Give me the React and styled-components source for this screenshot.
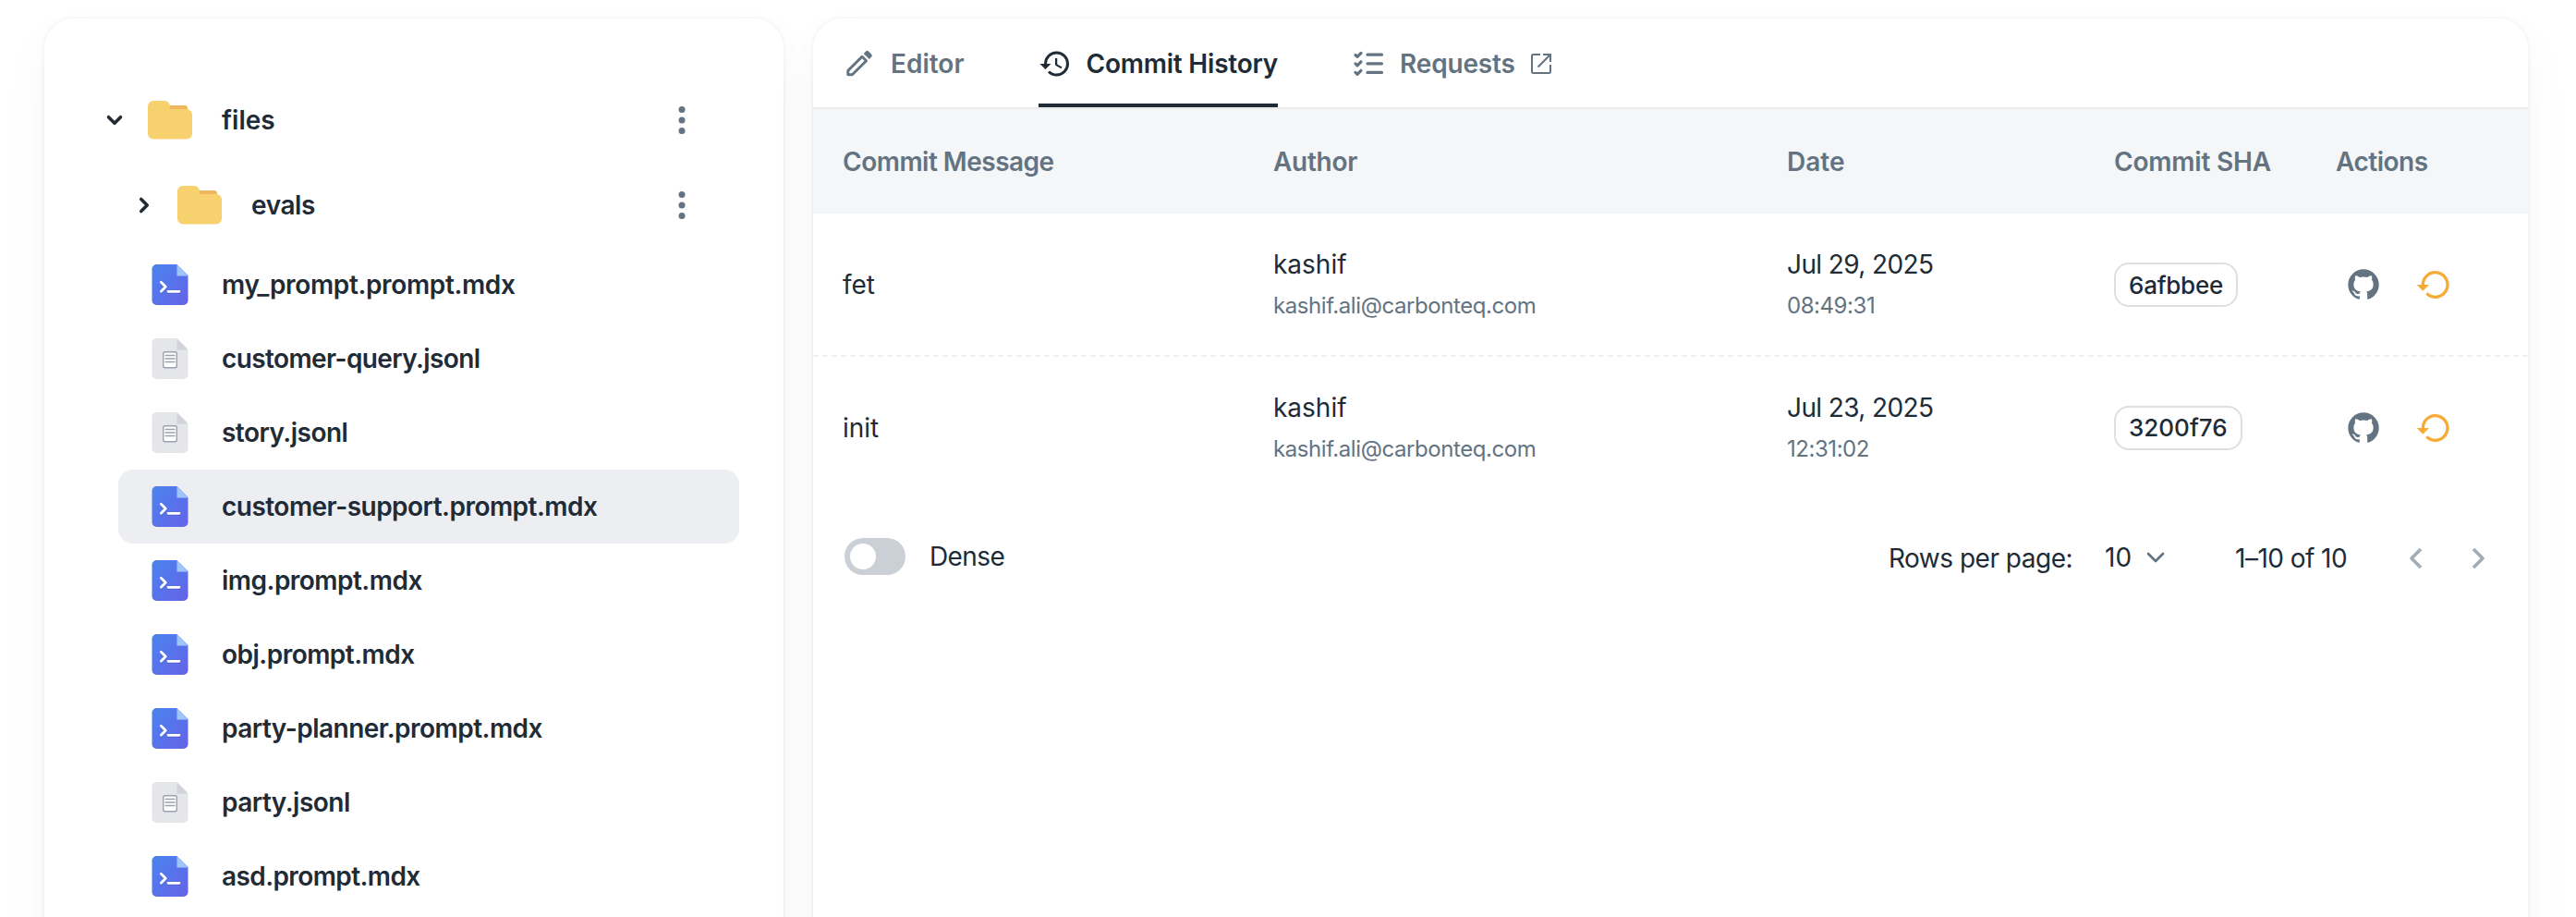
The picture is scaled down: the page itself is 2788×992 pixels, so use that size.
import React from "react";
import styled, { createGlobalStyle } from "styled-components";

const colors = {
  ink: "#212b36",
  gray: "#637381",
  disabled: "#a3adb8",
  warning: "#f5ab35",
};

const GlobalStyle = createGlobalStyle`
  *{
    box-sizing:border-box;
  }
  body{
    margin:0;
    background:#fff;
    color:${colors.ink};
    font-family:Inter, "Liberation Sans", sans-serif;
    font-size:28px;
  }
`;

const Page = styled.main`
  display: flex;
  gap: 32px;
  width: 2788px;
  height: 992px;
  padding: 20px 52px 0 48px;
  overflow: hidden;
`;

const Card = styled.section`
  height: 1200px;
  background: #fff;
  border-radius: 32px;
  box-shadow: 0 0 4px rgba(145, 158, 171, 0.2), 0 24px 48px -8px rgba(145, 158, 171, 0.12);
`;

const Sidebar = styled(Card)`
  width: 800px;
  flex-shrink: 0;
  padding: 64px 48px 0 60px;
`;

const Content = styled(Card)`
  flex: 1;
  overflow: hidden;
`;

const Text = styled.span`
  font-size: ${(p) => p.$size || 28}px;
  font-weight: ${(p) => p.$weight || 400};
  letter-spacing: ${(p) => p.$track || 0}px;
  color: ${(p) => p.$color || colors.ink};
  line-height: 44px;
  white-space: nowrap;
`;

const FolderRow = styled.div`
  display: flex;
  align-items: center;
  height: 92px;
  padding-left: ${(p) => p.$level * 32 + 3}px;
  padding-right: 58px;
  .folder {
    margin: 0 32px 0 23px;
  }
  .more {
    margin-left: auto;
  }
`;

const FileRow = styled.div`
  display: flex;
  align-items: center;
  gap: 36px;
  height: 80px;
  margin-left: 20px;
  padding-left: 36px;
  border-radius: 16px;
  background: ${(p) => (p.$active ? "#edeef2" : "transparent")};
`;

const Tabs = styled.nav`
  display: flex;
  gap: 80px;
  height: 98px;
  padding-left: 32px;
  border-bottom: 2px solid #e8eaec;
`;

const Tab = styled.div`
  display: flex;
  align-items: center;
  gap: 16px;
  height: 96px;
  padding-top: 1px;
  color: ${(p) => (p.$active ? colors.ink : colors.gray)};
  box-shadow: inset 0 -4px 0 ${(p) => (p.$active ? colors.ink : "transparent")};
`;

const Row = styled.div`
  display: grid;
  grid-template-columns: 466px 556px 354px 240px 1fr;
  align-items: center;
  height: ${(p) => (p.$last ? 154 : 155)}px;
  padding: 1px 0 0 32px;
  border-bottom: 2px dashed ${(p) => (p.$last ? "transparent" : "#f0f1f3")};
`;

const HeadRow = styled(Row)`
  height: 113px;
  padding-top: 0;
  background: #f4f6f8;
  border: none;
`;

const Stack = styled.div`
  display: flex;
  flex-direction: column;
  gap: 1px;
  padding-top: 1px;
`;

const Sha = styled.div`
  justify-self: start;
  display: flex;
  align-items: center;
  height: 48px;
  padding: 1px 14px 0;
  border: 2px solid #dce0e4;
  border-radius: 16px;
`;

const Actions = styled.div`
  display: flex;
  align-items: center;
  gap: 36px;
  padding-left: 10px;
`;

const Footer = styled.footer`
  display: flex;
  align-items: center;
  height: 124px;
  padding: 0 34px;
`;

const Switch = styled.div`
  width: 66px;
  height: 40px;
  margin-right: 26px;
  padding: 6px;
  border-radius: 20px;
  background: #cbd0d7;
  &::after {
    content: "";
    display: block;
    width: 28px;
    height: 28px;
    border-radius: 50%;
    background: #fff;
  }
`;

const Pager = styled.div`
  display: flex;
  align-items: center;
  margin-left: auto;
  padding-top: 3px;
`;

const PageSize = styled.div`
  display: flex;
  align-items: center;
  gap: 10px;
  margin: 0 70px 0 35px;
  padding-bottom: 2px;
`;

const Arrows = styled.div`
  display: flex;
  gap: 27px;
  margin-left: 55px;
`;

const Icon = ({ size = 40, color = "currentColor", children }) => (
  <svg width={size} height={size} viewBox="0 0 24 24" fill={color}>
    {children}
  </svg>
);

const chevrons = {
  down: "M6 9l6 6 6-6",
  right: "M9 6l6 6-6 6",
  left: "M15 6l-6 6 6 6",
};

const Chevron = ({ dir, size, color, width, cap = "round" }) => (
  <svg width={size} height={size} viewBox="0 0 24 24" fill="none" stroke={color} strokeWidth={width} strokeLinecap={cap} strokeLinejoin="round">
    <path d={chevrons[dir]} />
  </svg>
);

const FolderIcon = () => (
  <svg className="folder" width="48" height="42" viewBox="0 0 48 42">
    <path fill="#eeb65e" d="M20 5h20a3 3 0 0 1 3 3v6H20z" />
    <path fill="#f7d16e" d="M6 0h12a6 6 0 0 1 6 6v3h18a6 6 0 0 1 6 6v20.500a6 6 0 0 1-6 6H6a6 6 0 0 1-6-6V6a6 6 0 0 1 6-6z" />
  </svg>
);

const MoreIcon = () => (
  <svg className="more" width="8" height="30" viewBox="0 0 8 30" fill={colors.gray}>
    <circle cx="4" cy="3.500" r="3.500" />
    <circle cx="4" cy="15" r="3.500" />
    <circle cx="4" cy="26.500" r="3.500" />
  </svg>
);

const PromptIcon = () => (
  <svg width="40" height="44" viewBox="0 0 40 44">
    <defs>
      <linearGradient id="prompt" x1="0" y1="0" x2="1" y2="1">
        <stop offset="0" stopColor="#4a84ee" />
        <stop offset="1" stopColor="#6562e8" />
      </linearGradient>
    </defs>
    <path fill="url(#prompt)" d="M5 0h22.500l12 12v27a5 5 0 0 1-5 5H5.500a5 5 0 0 1-5-5V5a5 5 0 0 1 5-5z" />
    <path fill="#9dc4fb" d="M27.500 0l12 12.500h-12z" />
    <path fill="none" stroke="#3f4bb8" strokeOpacity=".35" strokeWidth="3" strokeLinecap="round" strokeLinejoin="round" d="M10.500 20.500l5 5-5 5M18 30.500h12.500" />
    <path fill="none" stroke="#fff" strokeWidth="2.800" strokeLinecap="round" strokeLinejoin="round" d="M10.300 19.300l5 5-5 5M18 29.300h12" />
  </svg>
);

const JsonIcon = () => (
  <svg width="40" height="44" viewBox="0 0 40 44">
    <path fill="#e5e6ea" d="M5.500 0h22l12 12v27a5 5 0 0 1-5 5h-29a5 5 0 0 1-5-5V5a5 5 0 0 1 5-5z" />
    <path fill="#d1d4da" d="M27.500 0l12 12.500h-12z" />
    <rect x="12.700" y="14.700" width="14.600" height="17" rx="2" fill="#fff" stroke="#9ca2ae" strokeWidth="1.400" />
    <path stroke="#9ca2ae" strokeWidth="1.300" d="M14.500 18.500h11M14.500 22h11M14.500 25.500h11" />
  </svg>
);

const PencilIcon = () => (
  <svg width="36" height="36" viewBox="0 0 36 36">
    <path fill="none" stroke="currentColor" strokeWidth="2.900" strokeLinejoin="round" d="M5.800 29.800V25.400L21 10.200l4.600 4.600-15.200 15z" />
    <path fill="currentColor" d="M22.700 6.900l2.500-2.400a2 2 0 0 1 2.800 0l3.200 3.200a2 2 0 0 1 0 2.800l-2.400 2.500z" />
  </svg>
);

const HistoryIcon = () => (
  <Icon size={36}>
    <path d="M13.500 8H12v5l4.280 2.540.72-1.210-3.500-2.080V8M13 3a9 9 0 0 0-9 9H1l3.960 4.030L9 12H6a7 7 0 0 1 7-7 7 7 0 0 1 7 7 7 7 0 0 1-7 7c-1.930 0-3.680-.79-4.940-2.060l-1.420 1.420A8.900 8.900 0 0 0 13 21a9 9 0 0 0 9-9 9 9 0 0 0-9-9" />
  </Icon>
);

const ChecksIcon = () => (
  <svg width="36" height="28" viewBox="0 0 36 28" fill="none" stroke="currentColor" strokeWidth="3.200" strokeLinecap="round" strokeLinejoin="round">
    <path d="M4 4.500l2 1.900 4-4M4 13.900l2 1.900 4-4M4 23.400l2 1.900 4-4M17 4.200h15.500M17 13.800h15.500M17 23.400h15.500" />
  </svg>
);

const OpenIcon = () => (
  <svg width="24" height="24" viewBox="0 0 24 24" fill="none" stroke="currentColor" strokeWidth="2">
    <path d="M11 2H3.500A1.500 1.500 0 0 0 2 3.500v17A1.500 1.500 0 0 0 3.500 22h17a1.500 1.500 0 0 0 1.500-1.500V13M14 2h8v8M22 2L8.500 15.500" />
  </svg>
);

const GithubIcon = () => (
  <Icon size={40} color={colors.gray}>
    <path d="M12 2A10 10 0 0 0 2 12c0 4.420 2.870 8.170 6.840 9.500.5.080.66-.23.66-.5v-1.690c-2.770.6-3.360-1.340-3.360-1.340-.46-1.160-1.110-1.470-1.110-1.470-.91-.62.070-.6.070-.6 1 .070 1.530 1.030 1.530 1.030.87 1.520 2.340 1.070 2.910.83.090-.65.350-1.090.630-1.340-2.220-.25-4.550-1.110-4.550-4.920 0-1.110.38-2 1.030-2.710-.1-.25-.45-1.290.1-2.640 0 0 .84-.27 2.750 1.020.79-.22 1.650-.33 2.500-.33s1.710.11 2.500.33c1.910-1.290 2.750-1.020 2.750-1.020.55 1.350.2 2.390.1 2.640.65.710 1.030 1.600 1.030 2.710 0 3.820-2.340 4.660-4.570 4.910.36.310.69.920.69 1.850V21c0 .27.16.59.67.5C19.140 20.160 22 16.420 22 12A10 10 0 0 0 12 2" />
  </Icon>
);

const RestoreIcon = () => (
  <Icon size={40} color={colors.warning}>
    <path d="M13 3a9 9 0 0 0-9 9H1l4 4 4-4H6a7 7 0 1 1 2.060 4.940l-1.420 1.420A9 9 0 1 0 13 3z" />
  </Icon>
);

const files = [
  { name: "my_prompt.prompt.mdx", track: -0.36 },
  { name: "customer-query.jsonl", track: -0.6 },
  { name: "story.jsonl" },
  { name: "customer-support.prompt.mdx", active: true },
  { name: "img.prompt.mdx" },
  { name: "obj.prompt.mdx" },
  { name: "party-planner.prompt.mdx" },
  { name: "party.jsonl" },
  { name: "asd.prompt.mdx", track: -0.6 },
];

const commits = [
  { message: "fet", date: "Jul 29, 2025", time: "08:49:31", sha: "6afbbee", track: -0.25 },
  { message: "init", date: "Jul 23, 2025", time: "12:31:02", sha: "3200f76", track: 0 },
];

const heads = [
  { label: "Commit Message", track: -0.5 },
  { label: "Author", track: -0.3 },
  { label: "Date", track: 0 },
  { label: "Commit SHA", track: -0.2 },
  { label: "Actions", track: -0.5 },
];

function Folder({ name, level, open, track }) {
  return (
    <FolderRow $level={level}>
      <Chevron dir={open ? "down" : "right"} size={26} color={colors.ink} width={3.3} />
      <FolderIcon />
      <Text $weight={600} $track={track}>{name}</Text>
      <MoreIcon />
    </FolderRow>
  );
}

function Commit({ commit, last }) {
  return (
    <Row $last={last}>
      <Text>{commit.message}</Text>
      <Stack>
        <Text>kashif</Text>
        <Text $size={24} $track={-0.42} $color={colors.gray}>kashif.ali@carbonteq.com</Text>
      </Stack>
      <Stack>
        <Text $track={-0.6}>{commit.date}</Text>
        <Text $size={24} $track={-0.45} $color={colors.gray}>{commit.time}</Text>
      </Stack>
      <Sha>
        <Text $size={26} $weight={500} $track={commit.track}>{commit.sha}</Text>
      </Sha>
      <Actions>
        <GithubIcon />
        <RestoreIcon />
      </Actions>
    </Row>
  );
}

function App() {
  return (
    <Page>
      <GlobalStyle />
      <Sidebar>
        <Folder name="files" level={0} track={0} open />
        <Folder name="evals" level={1} track={-0.4} />
        {files.map((file) => (
          <FileRow key={file.name} $active={file.active}>
            {file.name.endsWith(".mdx") ? <PromptIcon /> : <JsonIcon />}
            <Text $weight={600} $track={file.track || -0.52}>{file.name}</Text>
          </FileRow>
        ))}
      </Sidebar>

      <Content>
        <Tabs>
          <Tab>
            <PencilIcon />
            <Text $weight={600} $color={colors.gray}>Editor</Text>
          </Tab>
          <Tab $active>
            <HistoryIcon />
            <Text $weight={600} $track={-0.22}>Commit History</Text>
          </Tab>
          <Tab>
            <ChecksIcon />
            <Text $weight={600} $track={-0.2} $color={colors.gray}>Requests</Text>
            <OpenIcon />
          </Tab>
        </Tabs>
        <HeadRow>
          {heads.map((head) => (
            <Text key={head.label} $weight={600} $track={head.track} $color={colors.gray}>{head.label}</Text>
          ))}
        </HeadRow>
        {commits.map((commit, i) => (
          <Commit key={commit.sha} commit={commit} last={i === commits.length - 1} />
        ))}
        <Footer>
          <Switch />
          <Text $track={-0.6}>Dense</Text>
          <Pager>
            <Text $track={-0.5}>Rows per page:</Text>
            <PageSize>
              <Text>10</Text>
              <Chevron dir="down" size={32} color={colors.gray} width={2} />
            </PageSize>
            <Text $track={-0.55}>1–10 of 10</Text>
            <Arrows>
              <Chevron dir="left" size={40} color={colors.disabled} width={2.2} cap="butt" />
              <Chevron dir="right" size={40} color={colors.disabled} width={2.2} cap="butt" />
            </Arrows>
          </Pager>
        </Footer>
      </Content>
    </Page>
  );
}

export default App;
